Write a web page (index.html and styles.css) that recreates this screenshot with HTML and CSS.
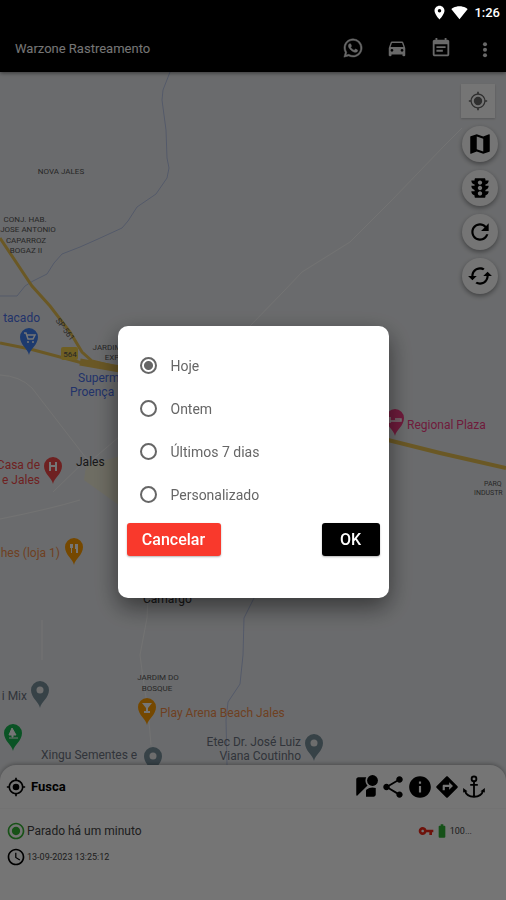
FILE: index.html
```html
<!DOCTYPE html>
<html lang="pt-BR">
<head>
    <meta charset="UTF-8">
    <meta name="viewport" content="width=device-width, initial-scale=1.0">
    <title>Warzone Rastreamento</title>
    <link rel="stylesheet" href="styles.css">
</head>
<body>
    <div class="status-bar">
        <svg class="icon-status" viewBox="0 0 24 24"><path d="M12 1C7.600 1 4 4.600 4 9c0 5.500 8 14 8 14s8-8.500 8-14c0-4.400-3.600-8-8-8zm0 10.800a2.800 2.800 0 1 1 0-5.600 2.800 2.800 0 0 1 0 5.600z"/></svg>
        <svg class="icon-wifi" viewBox="0 0 24 24"><path d="M12 21.500L23.640 7c-.45-.34-4.930-4-11.640-4C5.280 3 .81 6.660.36 7z"/></svg>
        <span>1:26</span>
    </div>
    <header>
        <h1>Warzone Rastreamento</h1>
        <nav>
            <a href="#" aria-label="WhatsApp"><svg viewBox="0 0 24 24"><path stroke="currentColor" stroke-width=".5" d="M12.040 2C6.580 2 2.130 6.450 2.130 11.910c0 1.750.46 3.450 1.320 4.950L2.050 22l5.250-1.380c1.450.79 3.080 1.210 4.740 1.210 5.460 0 9.910-4.450 9.910-9.910 0-2.650-1.030-5.140-2.900-7.010A9.816 9.816 0 0 0 12.040 2m.01 1.670c2.200 0 4.260.86 5.820 2.420a8.225 8.225 0 0 1 2.410 5.830c0 4.540-3.700 8.230-8.240 8.230-1.480 0-2.930-.39-4.190-1.150l-.3-.17-3.120.82.83-3.040-.2-.32a8.188 8.188 0 0 1-1.260-4.380c.01-4.540 3.700-8.240 8.250-8.240M8.530 7.330c-.16 0-.43.06-.66.31-.22.25-.87.86-.87 2.070 0 1.220.89 2.390 1 2.560.14.17 1.760 2.670 4.250 3.730.59.27 1.050.42 1.410.53.59.19 1.130.16 1.560.1.48-.07 1.460-.6 1.670-1.180.21-.58.21-1.070.15-1.180-.07-.1-.23-.16-.48-.27-.25-.14-1.470-.74-1.690-.82-.23-.08-.37-.12-.56.12-.16.25-.64.81-.78.97-.15.17-.29.19-.53.07-.26-.13-1.060-.39-2-1.230-.74-.66-1.230-1.470-1.380-1.720-.12-.24-.01-.39.11-.5.11-.11.27-.29.37-.44.13-.14.17-.25.25-.41.08-.17.04-.31-.02-.43-.06-.11-.56-1.350-.77-1.840-.2-.48-.4-.42-.56-.43-.14 0-.3-.01-.47-.01z"/></svg></a>
            <a href="#" aria-label="Veículos"><svg viewBox="0 0 24 24"><path d="M18.920 6.010C18.720 5.420 18.160 5 17.500 5h-11c-.66 0-1.210.42-1.420 1.010L3 12v8c0 .55.45 1 1 1h1c.55 0 1-.45 1-1v-1h12v1c0 .55.45 1 1 1h1c.55 0 1-.45 1-1v-8l-2.080-5.990zM6.500 16c-.83 0-1.500-.67-1.500-1.500S5.670 13 6.500 13s1.500.67 1.500 1.500S7.330 16 6.500 16zm11 0c-.83 0-1.500-.67-1.500-1.500s.67-1.500 1.500-1.500 1.500.67 1.500 1.500-.67 1.500-1.500 1.500zM5 11l1.500-4.500h11L19 11H5z"/></svg></a>
            <a href="#" aria-label="Eventos"><svg viewBox="0 0 24 24"><path d="M17 10H7v2h10v-2zm2-7h-1V1h-2v2H8V1H6v2H5c-1.110 0-2 .9-2 2v14c0 1.100.89 2 2 2h14c1.100 0 2-.9 2-2V5c0-1.100-.9-2-2-2zm0 16H5V8h14v11zm-5-5H7v2h7v-2z"/></svg></a>
            <a href="#" aria-label="Mais"><svg viewBox="0 0 24 24"><circle cx="12" cy="8" r="2.200"/><circle cx="12" cy="14" r="2.200"/><circle cx="12" cy="20" r="2.200"/></svg></a>
        </nav>
    </header>

    <main>
        <svg class="mapa" viewBox="0 72 506 709" preserveAspectRatio="xMinYMin slice">
            <defs>
                <path id="pino" d="M0 14C-1 8-9 4-9-4a9 9 0 0 1 18 0C9 4 1 8 0 14z"/>
            </defs>
            <!-- rios -->
            <g class="rio">
                <path d="M170 72L163 90 162 100 166 130 167 158 169 168 167 178 156 194 137 207 128 221 122 228 98 239 80 247 62 254 54 263 47 274 33 281 25 286 17 296H0"/>
                <path d="M254 598L244 618 243 655 240 684 228 702 226 720 227 765"/>
            </g>
            <!-- ruas -->
            <g class="rua">
                <path d="M250 326L284 291 302 272 350 242 392 200 444 146 462 128"/>
                <path d="M0 375Q20 376 32 388L86 458 92 460 120 436"/>
                <path d="M88 458L53 492M0 519Q50 509 80 500M42 620V660M148 598L147 618 140 655 143 678 148 710 151 745"/>
            </g>
            <path class="quadra" d="M86 466L120 456V506L84 480z"/>
            <!-- rodovias -->
            <g class="rodovia">
                <path d="M0 238L32 286 50 306 70 332 82 352 92 361 120 368"/>
                <path d="M0 343L30 349 60 357 90 365 120 370"/>
                <path d="M80 362L120 369" stroke-width="7"/>
                <path d="M388 440L440 453 506 468" stroke-width="4"/>
            </g>
            <rect class="placa" x="61" y="347" width="17" height="13" rx="2"/>
            <g class="bairro">
                <text x="61" y="174">NOVA JALES</text>
                <text x="25" y="222">CONJ. HAB.</text>
                <text x="28" y="232">JOSE ANTONIO</text>
                <text x="26" y="243">CAPARROZ</text>
                <text x="26" y="253">BOGAZ II</text>
                <text x="107" y="350">JARDIM</text>
                <text x="112" y="360">EXP</text>
                <text x="70" y="357">564</text>
                <text x="158" y="680">JARDIM DO</text>
                <text x="157" y="691">BOSQUE</text>
                <text x="484" y="486" text-anchor="start" class="corte">PARQ</text>
                <text x="474" y="495" text-anchor="start" class="corte">INDUSTR</text>
                <text transform="translate(63 331) rotate(53)">SP-561</text>
            </g>
            <g class="local">
                <text class="azul" x="40" y="322" text-anchor="end">tacado</text>
                <text class="azul" x="78" y="382">Superm</text>
                <text class="azul" x="70" y="396">Proença</text>
                <text class="vermelho" x="40" y="469" text-anchor="end">Casa de</text>
                <text class="vermelho" x="40" y="484" text-anchor="end">e Jales</text>
                <text class="rosa" x="407" y="429">Regional Plaza</text>
                <text class="laranja" x="60" y="557" text-anchor="end">hes (loja 1)</text>
                <text class="laranja" x="160" y="717">Play Arena Beach Jales</text>
                <text class="cidade" x="76" y="466">Jales</text>
                <text class="cidade" x="143" y="603">Camargo</text>
                <text x="27" y="700" text-anchor="end">i Mix</text>
                <text x="41" y="759">Xingu Sementes e</text>
                <text x="301" y="746" text-anchor="end">Etec Dr. José Luiz</text>
                <text x="301" y="760" text-anchor="end">Viana Coutinho</text>
            </g>
            <!-- marcadores -->
            <g transform="translate(29 341)"><use href="#pino" fill="#3f7ff0"/><path d="M-5-8h2l2 6h5l2-4h-8" fill="none" stroke="#fff" stroke-width="1.500"/><circle cx="-1" cy="1" r="1" fill="#fff"/><circle cx="4" cy="1" r="1" fill="#fff"/></g>
            <g transform="translate(53 470)"><use href="#pino" fill="#f04848"/><path d="M-3-8v9M3-8v9M-3-4h6" stroke="#fff" stroke-width="2"/></g>
            <g transform="translate(74 551)"><use href="#pino" fill="#ff9d00"/><path d="M-4-7h3v4h-1v5h-1v-5h-1zM1-7h3v9H2v-4H1z" fill="#fff"/></g>
            <g transform="translate(395 422)"><use href="#pino" fill="#f23c83"/><path d="M-5-5v6M-5-1H6V-3H0" fill="none" stroke="#fff" stroke-width="1.500"/></g>
            <g transform="translate(147 711)"><use href="#pino" fill="#ff9d00"/><path d="M-5-8H5L1-3v3h2v2h-6v-2h2v-3z" fill="#fff"/></g>
            <g transform="translate(40 694)"><use href="#pino" fill="#78909c"/><circle cy="-4" r="3.500" fill="#eee"/></g>
            <g transform="translate(153 760)"><use href="#pino" fill="#78909c"/><circle cy="-4" r="3.500" fill="#eee"/></g>
            <g transform="translate(314 747)"><use href="#pino" fill="#78909c"/><circle cy="-4" r="3.500" fill="#eee"/></g>
            <g transform="translate(13 737)"><use href="#pino" fill="#17b551"/><path d="M-1-9l4 7h-3v2h-1v-2h-3zM-4 1h9" fill="#fff" stroke="#fff"/></g>
        </svg>
        <div class="botoes-mapa">
            <button class="botao-gps" aria-label="Minha localização"><svg viewBox="0 0 24 24"><circle cx="12" cy="12" r="5"/><path d="M20.940 11c-.46-4.170-3.770-7.480-7.940-7.940V1h-2v2.060C6.830 3.520 3.520 6.830 3.060 11H1v2h2.060c.46 4.170 3.770 7.480 7.940 7.940V23h2v-2.060c4.170-.46 7.480-3.770 7.940-7.940H23v-2h-2.060zM12 19.500a7.500 7.500 0 1 1 0-15 7.500 7.500 0 0 1 0 15z"/></svg></button>
            <button class="botao-redondo" aria-label="Mapa"><svg viewBox="0 0 24 24"><path d="M20.500 3l-.16.03L15 5.100 9 3 3.360 4.900c-.21.07-.36.25-.36.48V20.500c0 .28.22.5.5.5l.16-.03L9 18.900l6 2.100 5.640-1.900c.21-.07.36-.25.36-.48V3.500c0-.28-.22-.5-.5-.5zM15 19l-6-2.110V5l6 2.110V19z"/></svg></button>
            <button class="botao-redondo" aria-label="Trânsito"><svg viewBox="0 0 24 24"><path d="M20 10h-3V8.860c1.720-.45 3-2 3-3.860h-3V4c0-.55-.45-1-1-1H8c-.55 0-1 .45-1 1v1H4c0 1.860 1.280 3.410 3 3.860V10H4c0 1.860 1.280 3.410 3 3.860V15H4c0 1.860 1.280 3.410 3 3.860V20c0 .55.45 1 1 1h8c.55 0 1-.45 1-1v-1.140c1.720-.45 3-2 3-3.860h-3v-1.140c1.720-.45 3-2 3-3.860zm-8 9c-1.110 0-2-.9-2-2s.89-2 2-2c1.100 0 2 .9 2 2s-.89 2-2 2zm0-5c-1.110 0-2-.9-2-2s.89-2 2-2c1.100 0 2 .9 2 2s-.89 2-2 2zm0-5c-1.110 0-2-.9-2-2 0-1.110.89-2 2-2 1.100 0 2 .89 2 2 0 1.100-.89 2-2 2z"/></svg></button>
            <button class="botao-redondo" aria-label="Atualizar"><svg viewBox="0 0 24 24"><path d="M17.650 6.350C16.200 4.900 14.210 4 12 4c-4.420 0-8 3.580-8 8s3.580 8 8 8c3.730 0 6.840-2.550 7.730-6h-2.080c-.82 2.330-3.040 4-5.650 4-3.310 0-6-2.690-6-6s2.690-6 6-6c1.660 0 3.140.69 4.220 1.780L13 11h7V4l-2.350 2.350z"/></svg></button>
            <button class="botao-redondo" aria-label="Sincronizar"><svg viewBox="0 0 24 24"><path d="M19 8l-4 4h3c0 3.310-2.690 6-6 6-1.010 0-1.970-.25-2.800-.7l-1.460 1.460C8.970 19.540 10.430 20 12 20c4.420 0 8-3.580 8-8h3l-4-4zM6 12c0-3.310 2.690-6 6-6 1.010 0 1.970.25 2.800.7l1.460-1.460C15.030 4.460 13.570 4 12 4c-4.420 0-8 3.580-8 8H1l4 4 4-4H6z"/></svg></button>
        </div>
    </main>

    <section class="painel">
        <div class="painel-topo">
            <svg class="icone" viewBox="0 0 24 24"><circle cx="12" cy="12" r="4"/><path d="M20.940 11c-.46-4.170-3.770-7.480-7.940-7.940V1h-2v2.060C6.830 3.520 3.520 6.830 3.060 11H1v2h2.060c.46 4.170 3.770 7.480 7.940 7.940V23h2v-2.060c4.170-.46 7.480-3.770 7.940-7.940H23v-2h-2.060zM12 19c-3.870 0-7-3.130-7-7s3.130-7 7-7 7 3.130 7 7-3.130 7-7 7z"/></svg>
            <h2>Fusca</h2>
            <div class="acoes">
                <button aria-label="Street View"><svg viewBox="0 0 24 24"><path d="M12.560 14.330c-.34.27-.56.7-.56 1.170V21h7c1.100 0 2-.9 2-2v-5.980c-.94-.33-1.950-.52-3-.52-2.030 0-3.930.7-5.440 1.830zM11.500 6c0-1.080.27-2.100.74-3H5c-1.100 0-2 .9-2 2v14c0 .55.23 1.050.59 1.410l9.820-9.820C12.230 9.420 11.500 7.800 11.500 6z"/><circle cx="18" cy="6" r="5"/></svg></button>
                <button aria-label="Compartilhar"><svg viewBox="0 0 24 24"><path d="M18 16.080c-.76 0-1.440.3-1.960.77L8.910 12.700c.05-.23.09-.46.09-.7s-.04-.47-.09-.7l7.050-4.110c.54.5 1.250.81 2.040.81 1.660 0 3-1.340 3-3s-1.340-3-3-3-3 1.340-3 3c0 .24.04.47.09.7L8.040 9.810C7.500 9.310 6.790 9 6 9c-1.660 0-3 1.340-3 3s1.340 3 3 3c.79 0 1.500-.31 2.040-.81l7.120 4.160c-.05.21-.08.43-.08.65 0 1.610 1.310 2.920 2.920 2.920s2.920-1.310 2.920-2.920-1.310-2.920-2.920-2.920z"/></svg></button>
                <button aria-label="Informações"><svg viewBox="0 0 24 24"><path d="M12 2C6.480 2 2 6.480 2 12s4.480 10 10 10 10-4.480 10-10S17.520 2 12 2zm1 15h-2v-6h2v6zm0-8h-2V7h2v2z"/></svg></button>
                <button aria-label="Rotas"><svg viewBox="0 0 24 24"><path d="M21.710 11.290l-9-9c-.39-.39-1.020-.39-1.410 0l-9 9c-.39.39-.39 1.020 0 1.410l9 9c.39.39 1.020.39 1.410 0l9-9c.39-.38.39-1.010 0-1.410zM14 14.500V12h-4v3H8v-4c0-.55.45-1 1-1h5V7.500l3.500 3.500-3.500 3.500z"/></svg></button>
                <button aria-label="Âncora"><svg viewBox="0 0 24 24"><g fill="none" stroke="#000" stroke-width="1.700"><circle cx="12" cy="4.500" r="2.200"/><path d="M12 7v14M8.500 10h7M3.500 15c1 4 4.500 6 8.500 6s7.500-2 8.500-6"/></g><path d="M2 17v-4l4 3zM22 17v-4l-4 3z"/></svg></button>
            </div>
        </div>
        <div class="painel-info">
            <div class="linha">
                <svg class="icone verde" viewBox="0 0 24 24"><path d="M12 7c-2.760 0-5 2.240-5 5s2.240 5 5 5 5-2.240 5-5-2.240-5-5-5zm0-5C6.480 2 2 6.480 2 12s4.480 10 10 10 10-4.480 10-10S17.520 2 12 2zm0 18c-4.420 0-8-3.580-8-8s3.580-8 8-8 8 3.580 8 8-3.580 8-8 8z"/></svg>
                <span class="estado">Parado há um minuto</span>
                <div class="sensores">
                    <svg class="chave" viewBox="0 0 24 24"><path d="M12.650 10C11.830 7.670 9.610 6 7 6c-3.310 0-6 2.690-6 6s2.690 6 6 6c2.610 0 4.830-1.670 5.650-4H17v4h4v-4h2v-4H12.650zM7 14c-1.100 0-2-.9-2-2s.9-2 2-2 2 .9 2 2-.9 2-2 2z"/></svg>
                    <svg class="bateria" viewBox="0 0 24 24"><path d="M15.670 4H14V2h-4v2H8.330C7.600 4 7 4.600 7 5.330v15.330C7 21.400 7.600 22 8.330 22h7.330c.74 0 1.340-.6 1.340-1.330V5.330C17 4.600 16.400 4 15.670 4z"/></svg>
                    <span>100...</span>
                </div>
            </div>
            <div class="linha">
                <svg class="icone" viewBox="0 0 24 24"><path d="M12 2C6.480 2 2 6.480 2 12s4.480 10 10 10 10-4.480 10-10S17.520 2 12 2zm0 18c-4.420 0-8-3.580-8-8s3.580-8 8-8 8 3.580 8 8-3.580 8-8 8zM12.500 7H11v6l5.250 3.150.75-1.230-4.500-2.670z"/></svg>
                <span class="data">13-09-2023 13:25:12</span>
            </div>
        </div>
    </section>

    <div class="fundo">
        <form class="dialogo" role="dialog" aria-label="Período">
            <label><input type="radio" name="periodo" checked>Hoje</label>
            <label><input type="radio" name="periodo">Ontem</label>
            <label><input type="radio" name="periodo">Últimos 7 dias</label>
            <label><input type="radio" name="periodo">Personalizado</label>
            <div class="dialogo-botoes">
                <button type="button" class="cancelar">Cancelar</button>
                <button type="button" class="ok">OK</button>
            </div>
        </form>
    </div>
</body>
</html>
```

FILE: styles.css
```css
* {
    box-sizing: border-box;
}
body {
    font-family: Roboto, Arial, sans-serif;
    margin: 0;
    min-height: 100vh;
    display: flex;
    flex-direction: column;
    background-color: #fff;
    color: #333;
}
svg {
    display: block;
    fill: currentColor;
}
button {
    font-family: inherit;
    border: none;
    padding: 0;
    cursor: pointer;
}
/* Barra de estado, fica por cima do fundo escuro */
.status-bar {
    position: relative;
    z-index: 20;
    height: 24px;
    padding: 0 6px;
    display: flex;
    align-items: center;
    justify-content: flex-end;
    background-color: #000;
    color: #fff;
    font-size: 13px;
    font-weight: 500;
}
.icon-status {
    width: 15px;
    height: 15px;
    margin-right: 4px;
}
.icon-wifi {
    width: 17px;
    height: 17px;
    margin-right: 6px;
}
header {
    position: relative;
    z-index: 2;
    height: 48px;
    padding: 0 10px 0 15px;
    display: flex;
    align-items: center;
    justify-content: space-between;
    background-color: #000;
    color: #fff;
    box-shadow: 0 1px 4px rgba(0, 0, 0, 0.5);
}
h1 {
    margin: 0;
    font-size: 13px;
    font-weight: 400;
}
nav {
    display: flex;
    gap: 22px;
}
nav a {
    color: #e4e4e4;
}
nav svg {
    width: 22px;
    height: 22px;
}
/* Mapa */
main {
    position: relative;
    flex: 1;
    min-height: 300px;
    overflow: hidden;
    background-color: #e8eaed;
}
.mapa {
    position: absolute;
    inset: 0;
    width: 100%;
    height: 100%;
}
.rio, .rua, .rodovia {
    fill: none;
}
.rio {
    stroke: #b6c3e6;
    stroke-width: 1;
}
.rua {
    stroke: #fafafa;
    stroke-width: 1;
}
.rodovia {
    stroke: #e8c052;
    stroke-width: 3;
}
.quadra {
    fill: #f0edd8;
}
.placa {
    fill: #f2cf4d;
}
.bairro {
    fill: #555;
    font-size: 8px;
    text-anchor: middle;
}
.bairro .corte {
    font-size: 7px;
    text-anchor: start;
}
.local {
    fill: #6b7280;
    font-size: 12px;
}
.local .cidade {
    fill: #333;
}
.local .azul {
    fill: #4a6fe8;
}
.local .vermelho {
    fill: #f04848;
}
.local .rosa {
    fill: #f23c83;
}
.local .laranja {
    fill: #f08c4a;
}
.botoes-mapa {
    position: absolute;
    top: 12px;
    right: 7px;
    display: flex;
    flex-direction: column;
    align-items: center;
    gap: 8px;
}
.botao-gps {
    width: 34px;
    height: 34px;
    margin-right: 4px;
    display: grid;
    place-items: center;
    background-color: #fff;
    color: #666;
    box-shadow: 0 1px 2px rgba(0, 0, 0, 0.2);
}
.botao-gps svg {
    width: 20px;
    height: 20px;
}
.botao-redondo {
    width: 36px;
    height: 36px;
    display: grid;
    place-items: center;
    border-radius: 50%;
    background-color: #fff;
    color: #000;
    box-shadow: 0 2px 5px rgba(0, 0, 0, 0.4);
}
.botao-redondo svg {
    width: 26px;
    height: 26px;
}
/* Painel do veículo */
.painel {
    position: relative;
    margin-top: -16px;
    min-height: 135px;
    border-radius: 16px 16px 0 0;
    background-color: #fff;
    box-shadow: 0 -1px 4px rgba(0, 0, 0, 0.3);
}
.painel-topo {
    height: 44px;
    padding: 0 19px 0 6px;
    display: flex;
    align-items: center;
    border-bottom: 1px solid #f8f8f8;
}
h2 {
    margin: 0 0 0 5px;
    font-size: 13px;
    color: #000;
}
.acoes {
    margin-left: auto;
    display: flex;
    gap: 1px;
}
.acoes button {
    background: none;
    color: #000;
}
.acoes svg {
    width: 26px;
    height: 26px;
}
.icone {
    width: 20px;
    height: 20px;
    flex: none;
    color: #000;
}
.verde {
    color: #34b233;
}
.painel-info {
    padding: 9px 34px 0 6px;
    color: #444;
}
.linha {
    height: 26px;
    display: flex;
    align-items: center;
    gap: 1px;
}
.estado {
    font-size: 12px;
}
.data {
    font-size: 9px;
}
.sensores {
    margin-left: auto;
    display: flex;
    align-items: center;
    font-size: 9px;
}
.chave {
    width: 16px;
    height: 16px;
    color: #f02818;
}
.bateria {
    width: 16px;
    height: 16px;
    color: #2eb135;
}
/* Diálogo de período */
.fundo {
    position: fixed;
    inset: 0;
    z-index: 10;
    padding-top: 24px;
    display: grid;
    place-items: center;
    background-color: rgba(0, 0, 0, 0.54);
}
.dialogo {
    width: calc(100% - 235px);
    min-width: 271px;
    padding: 18px 9px 42px;
    border-radius: 10px;
    background-color: #fff;
    box-shadow: 0 9px 24px rgba(0, 0, 0, 0.5);
}
.dialogo label {
    height: 43px;
    padding-left: 13px;
    display: flex;
    align-items: center;
    gap: 14px;
    color: #666;
    font-size: 14px;
}
.dialogo input {
    appearance: none;
    width: 17px;
    height: 17px;
    margin: 0;
    border: 2px solid #666;
    border-radius: 50%;
}
.dialogo input:checked {
    background: radial-gradient(circle, #666 4px, transparent 5px);
}
.dialogo-botoes {
    margin-top: 7px;
    display: flex;
    justify-content: space-between;
}
.dialogo-botoes button {
    height: 33px;
    border-radius: 3px;
    color: #fff;
    font-size: 16px;
    font-weight: 500;
    box-shadow: 0 1px 2px rgba(0, 0, 0, 0.3);
}
.dialogo-botoes .cancelar {
    width: 94px;
    background-color: #f9392c;
}
.dialogo-botoes .ok {
    width: 58px;
    background-color: #000;
}
```
